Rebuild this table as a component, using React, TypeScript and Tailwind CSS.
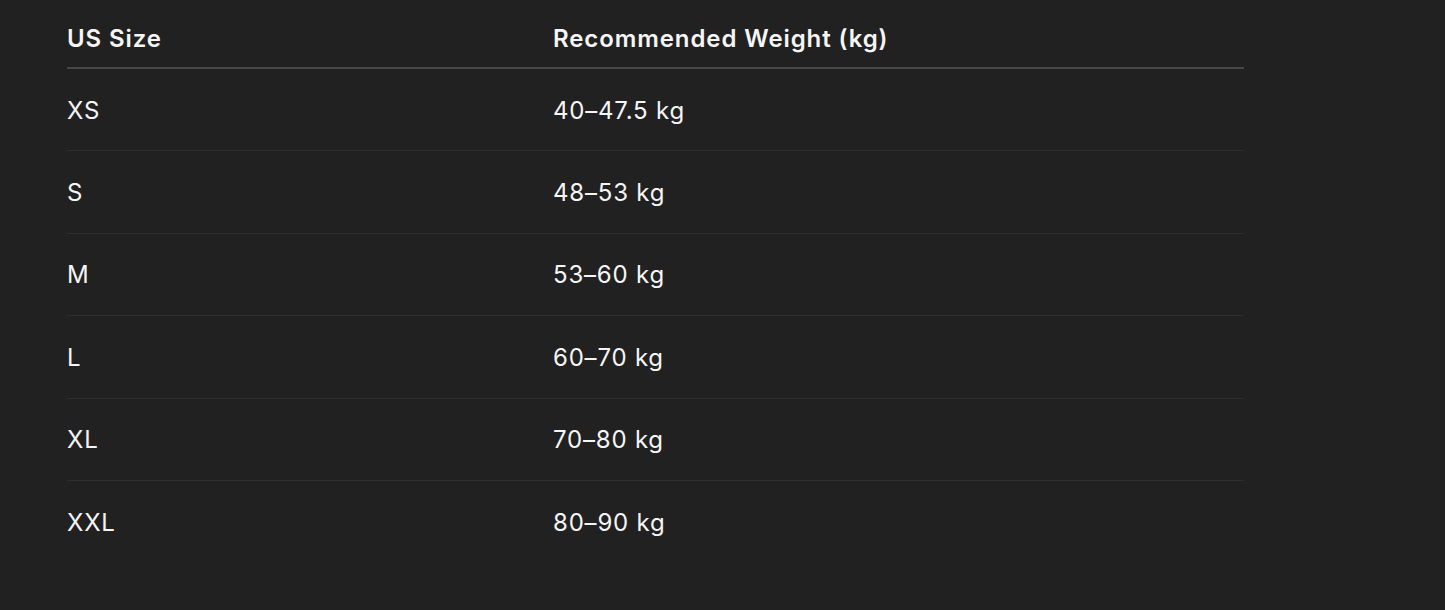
const rows = [
  { size: "XS", weight: "40–47.5 kg" },
  { size: "S", weight: "48–53 kg" },
  { size: "M", weight: "53–60 kg" },
  { size: "L", weight: "60–70 kg" },
  { size: "XL", weight: "70–80 kg" },
  { size: "XXL", weight: "80–90 kg" },
];

export default function App() {
  return (
    <div
      className="min-h-[610px] w-full bg-[#212121] pl-[67px] pr-[201px] pt-2 text-[#f5f5f5] antialiased"
      style={{ fontFamily: "Inter, 'Noto Sans', sans-serif" }}
    >
      <table className="w-full border-collapse text-left text-[24px] leading-none">
        <thead>
          <tr className="border-b-2 border-[#474747]">
            <th className="h-[60px] w-[486px] p-0 pt-[2px] font-semibold tracking-[0.9px]">US Size</th>
            <th className="h-[60px] p-0 pt-[2px] font-semibold tracking-[0.9px]">Recommended Weight (kg)</th>
          </tr>
        </thead>
        <tbody>
          {rows.map((r, i) => (
            <tr
              key={r.size}
              className={i < rows.length - 1 ? "border-b border-[#2e2e2e]" : ""}
            >
              <td className="h-[82.5px] p-0 pt-[2px] font-normal tracking-[0.8px]">{r.size}</td>
              <td className="h-[82.5px] p-0 pt-[2px] font-normal tracking-[0.8px]">{r.weight}</td>
            </tr>
          ))}
        </tbody>
      </table>
    </div>
  );
}
